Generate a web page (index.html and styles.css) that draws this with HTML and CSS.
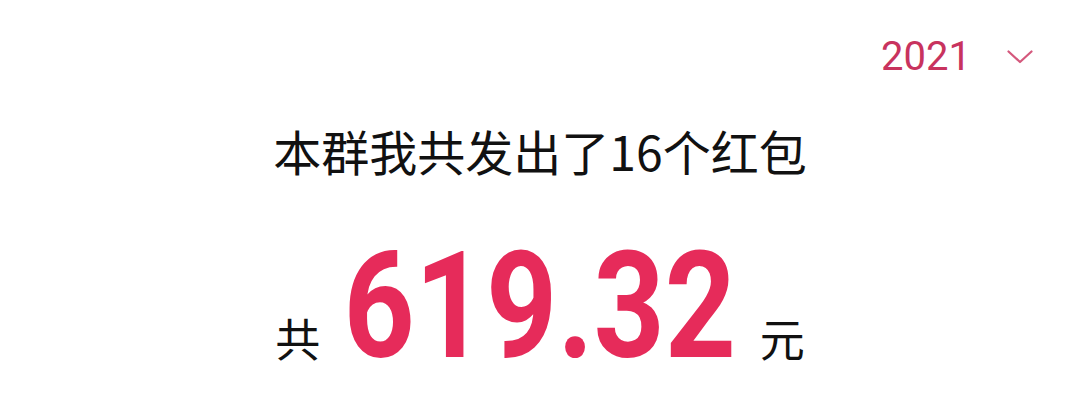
FILE: index.html
```html
<!DOCTYPE html>
<html lang="zh-CN">
<head>
<meta charset="utf-8">
<link rel="stylesheet" href="styles.css">
</head>
<body>
<div class="page">
  <div class="header">
    <span class="year">2021</span>
    <svg class="chevron" width="26" height="14" viewBox="0 0 26 14"><path d="M1.5 1.5 L13 12 L24.5 1.5" fill="none" stroke="#d4587c" stroke-width="2.2" stroke-linecap="round" stroke-linejoin="round"/></svg>
  </div>
  <div class="title">本群我共发出了16个红包</div>
  <div class="amount">
    <span class="unit">共</span>
    <span class="number">619.32</span>
    <span class="unit">元</span>
  </div>
</div>
</body>
</html>
```

FILE: styles.css
```css
html, body {
  margin: 0;
  padding: 0;
  background: #ffffff;
}
.page {
  width: 1080px;
  height: 412px;
  display: flex;
  flex-direction: column;
  font-family: "Noto Sans CJK SC", "Noto Sans", sans-serif;
}
.header {
  display: flex;
  justify-content: flex-end;
  align-items: center;
  padding: 37px 47px 0 0;
  gap: 36px;
}
.year {
  font-family: Roboto, "Noto Sans", sans-serif;
  font-size: 40px;
  line-height: 40px;
  color: #c8335e;
}
.chevron {
  display: block;
}
.title {
  margin-top: 45px;
  text-align: center;
  font-size: 48px;
  line-height: 56px;
  color: #111111;
}
.amount {
  margin-top: 69px;
  display: flex;
  justify-content: center;
  align-items: baseline;
}
.unit {
  font-size: 45px;
  line-height: 50px;
  color: #111111;
}
.number {
  display: inline-block;
  font-family: Roboto, sans-serif;
  font-weight: 700;
  font-size: 148px;
  line-height: 120px;
  color: #e62b5a;
  transform: scaleX(0.84);
  margin: 0 -14px;
}
```
